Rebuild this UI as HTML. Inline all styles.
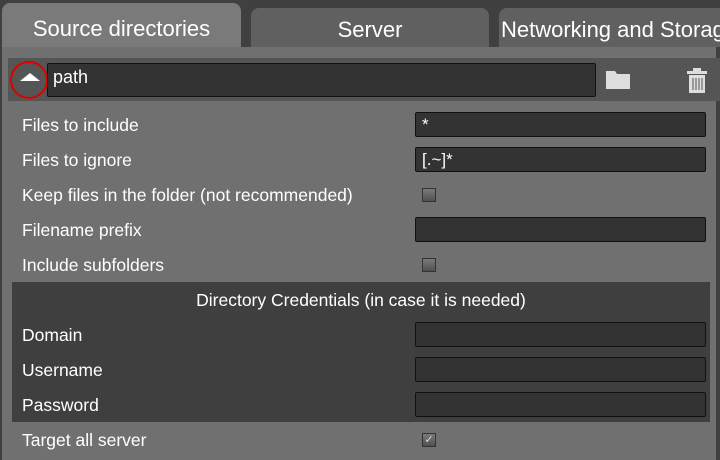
<!DOCTYPE html>
<html><head><style>
*{margin:0;padding:0;box-sizing:border-box}
body{width:720px;height:460px;background:#404040;position:relative;overflow:hidden;font-family:"Liberation Sans",sans-serif;color:#fff}
.tab{position:absolute;border-radius:8px 8px 0 0;text-align:center;font-size:22px;line-height:40px}
.panel{position:absolute;left:2px;top:47px;width:714px;height:413px;background:#707070}
.pathrow{position:absolute;left:8px;top:58px;width:712px;height:43px;background:#555}
.lbl{position:absolute;left:22px;font-size:17.5px;line-height:20px;white-space:nowrap}
.inp{position:absolute;left:415px;width:291px;height:25px;background:#333;border:1px solid #111;border-radius:2px;font-size:17px;line-height:23px;padding-left:6px}
.cb{position:absolute;left:422px;width:14px;height:14px;border:1px solid #333;background:linear-gradient(#7a7a7a,#505050)}
.cred{position:absolute;left:12px;top:282px;width:698px;height:140px;background:#3f3f3f}
</style></head><body>
<div class="tab" style="left:2px;top:3px;width:239px;height:44px;background:#7a7a7a;line-height:52px">Source directories</div>
<div class="tab" style="left:251px;top:8px;width:238px;height:39px;background:#606060;line-height:44px">Server</div>
<div class="tab" style="left:499px;top:8px;width:240px;height:39px;background:#606060;line-height:44px;text-align:left;padding-left:2px">Networking and Storage</div>
<div class="panel"></div>
<div class="pathrow"></div>
<div style="position:absolute;left:10px;top:61px;width:38px;height:38px;border:2px solid #d00;border-radius:50%"></div>
<div style="position:absolute;left:20px;top:73px;width:0;height:0;border-left:10px solid transparent;border-right:10px solid transparent;border-bottom:8px solid #fff"></div>
<div style="position:absolute;left:47px;top:63px;width:549px;height:34px;background:#333;border:1px solid #111;border-radius:2px;font-size:18px;padding-left:5px;line-height:26px">path</div>
<svg style="position:absolute;left:606px;top:70px" width="24" height="20"><path d="M0 1h9l2 3h13v15H0z" fill="#ddd"/></svg>
<svg style="position:absolute;left:686px;top:67px" width="22" height="27"><path d="M7 1h8v3h6v3H1V4h6z" fill="#ddd"/><path d="M3 8h16v18H3z" fill="#ddd"/><path d="M7 11v12M10 11v12M13 11v12M16 11v12" stroke="#555" stroke-width="1"/></svg>
<div class="lbl" style="top:115px">Files to include</div><div class="inp" style="top:112px">*</div>
<div class="lbl" style="top:150px">Files to ignore</div><div class="inp" style="top:147px">[.~]*</div>
<div class="lbl" style="top:185px">Keep files in the folder (not recommended)</div><div class="cb" style="top:188px"></div>
<div class="lbl" style="top:220px">Filename prefix</div><div class="inp" style="top:217px"></div>
<div class="lbl" style="top:255px">Include subfolders</div><div class="cb" style="top:258px"></div>
<div class="cred"></div>
<div style="position:absolute;left:12px;width:698px;top:290px;text-align:center;font-size:17.5px;line-height:20px">Directory Credentials (in case it is needed)</div>
<div class="lbl" style="top:325px">Domain</div><div class="inp" style="top:322px"></div>
<div class="lbl" style="top:360px">Username</div><div class="inp" style="top:357px"></div>
<div class="lbl" style="top:395px">Password</div><div class="inp" style="top:392px"></div>
<div class="lbl" style="top:430px">Target all server</div><div class="cb" style="top:433px;font-size:11px;line-height:12px;text-align:center;color:#ddd">✓</div>
</body></html>
